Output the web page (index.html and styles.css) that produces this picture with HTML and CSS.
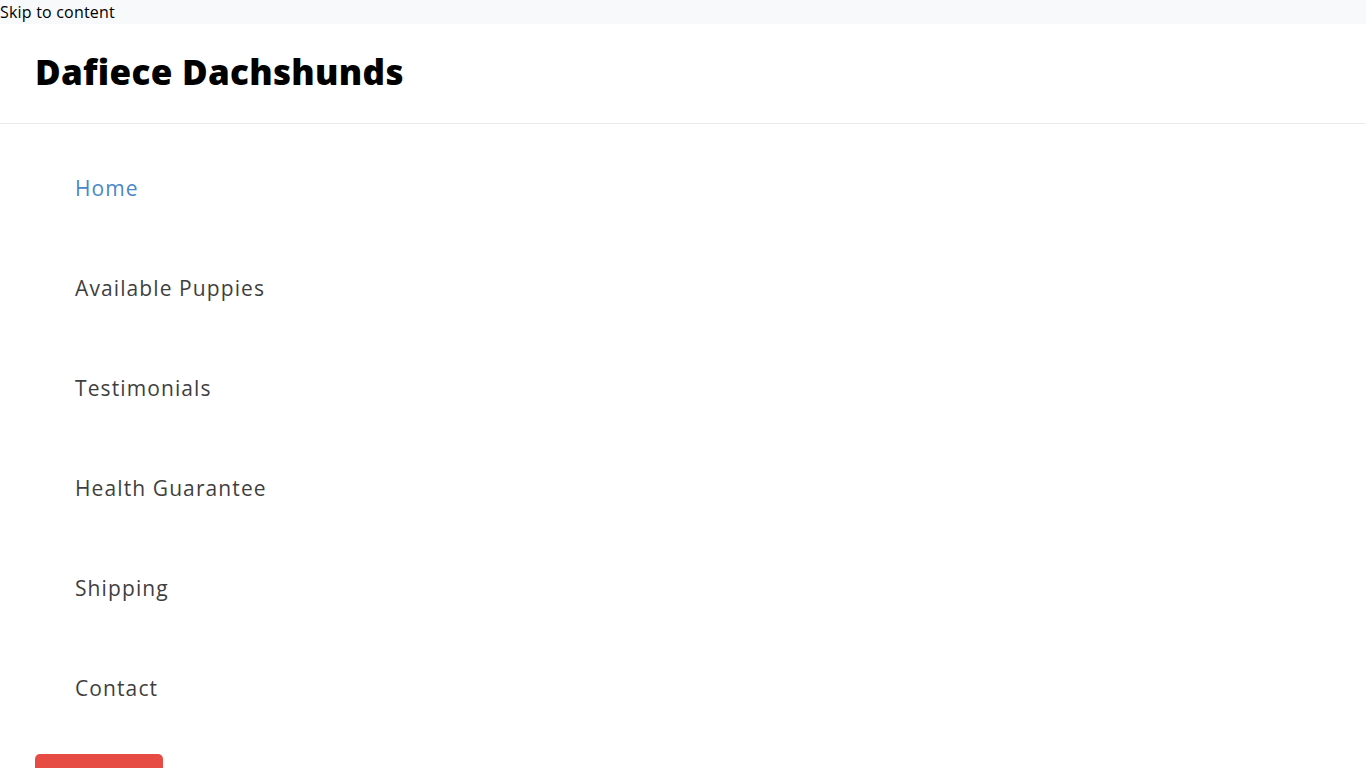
FILE: index.html
```html
<!DOCTYPE html>
<html lang="en">
<head>
<meta charset="utf-8">
<title>Dafiece Dachshunds</title>
<link rel="stylesheet" href="styles.css">
</head>
<body>
<div class="topbar"><a class="skip" href="#content">Skip to content</a></div>
<header class="header">
  <div class="brand">Dafiece Dachshunds</div>
</header>
<nav class="nav">
  <ul class="menu">
    <li class="item"><a class="link active" href="#">Home</a></li>
    <li class="item"><a class="link" href="#">Available Puppies</a></li>
    <li class="item"><a class="link" href="#">Testimonials</a></li>
    <li class="item"><a class="link" href="#">Health Guarantee</a></li>
    <li class="item"><a class="link" href="#">Shipping</a></li>
    <li class="item"><a class="link" href="#">Contact</a></li>
  </ul>
  <div class="cta-wrap"><a class="cta" href="#"></a></div>
</nav>
</body>
</html>
```
FILE: styles.css
```css
html, body {
  margin: 0;
  padding: 0;
  background: #ffffff;
  font-family: "Open Sans", "DejaVu Sans", sans-serif;
}
.topbar {
  height: 24px;
  background: #f8f9fb;
  display: flex;
  align-items: center;
}
.skip {
  color: #000;
  text-decoration: none;
  font-size: 16px;
  line-height: 24px;
  letter-spacing: 0.2px;
}
.header {
  height: 99px;
  border-bottom: 1px solid #e8eaed;
  display: flex;
  align-items: center;
  padding: 0 35px;
}
.brand {
  font-size: 35px;
  font-weight: 800;
  color: #000;
  letter-spacing: 0.3px;
  margin-top: -4px;
}
.menu {
  list-style: none;
  margin: 0;
  padding: 14px 0 0 75px;
}
.item {
  height: 100px;
  display: flex;
  align-items: center;
}
.link {
  font-size: 21px;
  color: #3f3f3f;
  text-decoration: none;
  letter-spacing: 1.1px;
}
.link.active {
  color: #4a87c7;
}
.cta-wrap {
  padding: 16px 35px 0;
}
.cta {
  display: block;
  width: 128px;
  height: 44px;
  background: #e74c44;
  border-radius: 5px;
}
```
